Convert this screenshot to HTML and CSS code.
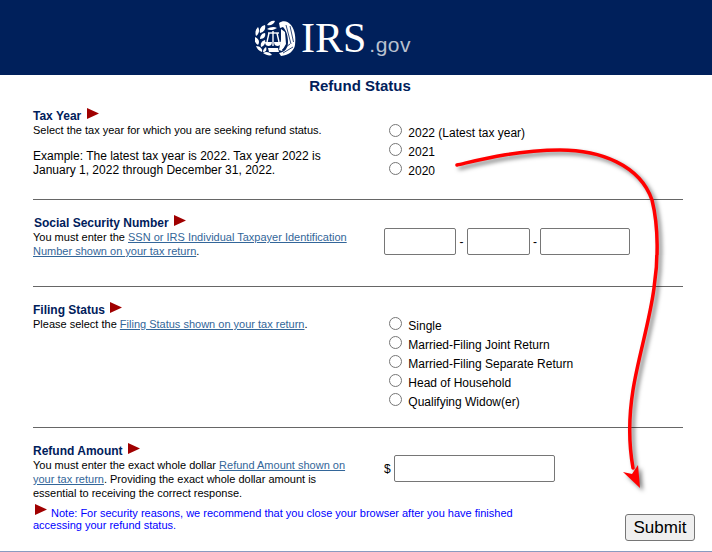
FILE: index.html
```html
<!DOCTYPE html>
<html lang="en">

<head>
    <meta charset="UTF-8">
    <title>Refund Status</title>
    <link rel="stylesheet" href="styles.css">
</head>

<body>
    <header class="banner">
        <svg class="seal" viewBox="0 0 41 36" width="41" height="36" aria-hidden="true">
            <!-- wreath -->
            <g fill="#fff">
                <path d="M10 5 C6 6 4 9 5 13 C9 12 11 9 10 5Z" />
                <path d="M3 7 C0 10 0 13 1 16 C4 14 5 10 3 7Z" />
                <path d="M10 13 C7 13 5 16 5 19 C9 19 11 16 10 13Z" />
                <path d="M0 17 C-1 20 0 23 3 25 C5 22 4 19 0 17Z" />
                <path d="M10 20 C7 21 5 23 6 27 C9 26 11 23 10 20Z" />
                <path d="M1 26 C2 29 4 31 7 32 C8 29 5 26 1 26Z" />
                <path d="M11 27 C9 28 8 30 8 32 C11 32 12 30 11 27Z" />
                <path d="M8 33 C11 35 14 36 17 35 C15 32 11 31 8 33Z" />
                <path d="M12 5 C14 2 17 0 20 1 C19 4 16 6 12 5Z" />
                <path d="M12 9 C15 7 19 6 22 8 C19 10 15 11 12 9Z" />
            </g>
            <!-- eagle body and wing -->
            <g fill="#fff">
                <path d="M24 3 C28 0 33 1 36 5 C40 10 41 18 40 25 C39 31 34 35 26 36 L24 33 C30 32 33 28 33 22 C33 15 31 10 28 7 L25 8 Z" />
                <path d="M26 9 L30 12 L31 24 L27 31 L24 30 L26 20 Z" />
            </g>
            <g stroke="#00205b" stroke-width="0.800" fill="none">
                <path d="M31 5 L36 24" />
                <path d="M35 6 L38.500 22" />
                <path d="M28 33 L38 27" />
                <path d="M27 30 L35 24" />
            </g>
            <!-- scales -->
            <g stroke="#fff" stroke-width="1.400" fill="none">
                <path d="M18 11 L18 26" />
                <path d="M13 13 L24 13" />
                <path d="M14 13 L12 22" />
                <path d="M22 13 L24 22" />
            </g>
            <path d="M10 22 H17 C17 25 15 26 13.500 26 C12 26 10 25 10 22Z" fill="#fff" />
            <path d="M19 22 H26 C26 25 24 26 22.500 26 C21 26 19 25 19 22Z" fill="#fff" />
            <path d="M13 28 H23 L24 32 H14Z" fill="#fff" />
        </svg>
        <span class="irs">IRS</span><span class="gov">.gov</span>
    </header>

    <h1 class="page-title">Refund Status</h1>

    <form class="refund-form">
        <section class="row row-year">
            <div class="info">
                <h2>Tax Year <svg class="marker" viewBox="0 0 12 11"><path d="M0 0 L12 5.500 L0 11Z" /></svg></h2>
                <p class="small">Select the tax year for which you are seeking refund status.</p>
                <p class="example">Example: The latest tax year is 2022. Tax year 2022 is January 1, 2022 through December 31, 2022.</p>
            </div>
            <div class="choices">
                <label><input type="radio" name="year"> 2022 (Latest tax year)</label>
                <label><input type="radio" name="year"> 2021</label>
                <label><input type="radio" name="year"> 2020</label>
            </div>
        </section>

        <section class="row row-ssn">
            <div class="info">
                <h2 class="nudge">Social Security Number <svg class="marker" viewBox="0 0 12 11"><path d="M0 0 L12 5.500 L0 11Z" /></svg></h2>
                <p class="small">You must enter the <a href="#">SSN or IRS Individual Taxpayer Identification Number shown on your tax return</a>.</p>
            </div>
            <div class="ssn">
                <input class="ssn-a" type="text"><span>-</span><input class="ssn-b" type="text"><span class="dash-b">-</span><input class="ssn-c" type="text">
            </div>
        </section>

        <section class="row row-status">
            <div class="info">
                <h2>Filing Status <svg class="marker" viewBox="0 0 12 11"><path d="M0 0 L12 5.500 L0 11Z" /></svg></h2>
                <p class="small">Please select the <a href="#">Filing Status shown on your tax return</a>.</p>
            </div>
            <div class="choices">
                <label><input type="radio" name="status"> Single</label>
                <label><input type="radio" name="status"> Married-Filing Joint Return</label>
                <label><input type="radio" name="status"> Married-Filing Separate Return</label>
                <label><input type="radio" name="status"> Head of Household</label>
                <label><input type="radio" name="status"> Qualifying Widow(er)</label>
            </div>
        </section>

        <section class="row row-amount">
            <div class="info">
                <h2>Refund Amount <svg class="marker" viewBox="0 0 12 11"><path d="M0 0 L12 5.500 L0 11Z" /></svg></h2>
                <p class="small">You must enter the exact whole dollar <a href="#">Refund Amount shown on your tax return</a>. Providing the exact whole dollar amount is essential to receiving the correct response.</p>
            </div>
            <div class="amount">
                <span>$</span><input type="text">
            </div>
        </section>

        <div class="form-end">
            <p class="note"><svg class="marker" viewBox="0 0 12 11"><path d="M0 0 L12 5.500 L0 11Z" /></svg> Note: For security reasons, we recommend that you close your browser after you have finished accessing your refund status.</p>
            <button type="button">Submit</button>
        </div>
    </form>

    <!-- hand drawn arrow on top of the page -->
    <svg class="scribble" viewBox="0 0 712 552" width="712" height="552" aria-hidden="true">
        <path d="M457 165 C475 161 515 150 560 150 C600 150 640 165 652 200 C659 228 658 262 654 288 C650 320 638 358 633 390 C629 415 628 440 633 468" fill="none" stroke="#ff0000" stroke-width="3.500" stroke-linecap="round" />
        <path d="M623 472 L632 474 L638 465 L640 488Z" fill="#ff0000" />
    </svg>
</body>

</html>
```

FILE: styles.css
```css
body {
    margin: 0;
    font-family: "Liberation Sans", Arial, sans-serif;
    font-size: 12px;
    color: #000;
    background: #fff;
}

.banner {
    height: 75px;
    background-color: #00205b;
    display: flex;
    justify-content: center;
    align-items: center;
    padding-right: 46px;
    box-sizing: border-box;
}

.seal {
    margin-right: 5px;
}

.irs {
    font-family: "Liberation Serif", serif;
    font-size: 42px;
    color: #fff;
}

.gov {
    font-size: 21px;
    color: #b9c0cf;
    letter-spacing: 0.5px;
    margin-top: 14px;
    margin-left: 3px;
}

.page-title {
    margin: 0;
    padding-left: 8px;
    height: 22px;
    line-height: 22px;
    font-size: 15px;
    text-align: center;
    color: #00205b;
}

.refund-form {
    margin: 0 29px 0 33px;
}

.row {
    display: grid;
    grid-template-columns: 351px 1fr;
    border-bottom: 1px solid #666;
    box-sizing: border-box;
}

.row-year {
    height: 103px;
    padding-top: 11px;
}

.row-ssn {
    height: 87px;
    padding-top: 15px;
}

.row-status {
    height: 141px;
    padding-top: 15px;
}

.row-amount {
    height: 78px;
    padding-top: 15px;
    border-bottom: none;
}

h2 {
    margin: 0;
    font-size: 12px;
    line-height: 14px;
    font-weight: bold;
    color: #00205b;
}

.nudge {
    margin-left: 1px;
}

.marker {
    width: 12px;
    height: 11px;
    margin-left: 2px;
    vertical-align: 1px;
    fill: #a00000;
}

.small {
    margin: 0;
    font-size: 11px;
    line-height: 14px;
    max-width: 315px;
}

.example {
    margin: 12px 0 0;
    font-size: 12px;
    line-height: 14px;
    max-width: 300px;
}

a {
    color: #336699;
}

.choices {
    display: flex;
    flex-direction: column;
}

.row-year .choices {
    margin-top: 13px;
}

.row-status .choices {
    margin-top: 12px;
}

.choices label {
    height: 19px;
    line-height: 19px;
    white-space: nowrap;
}

.choices input {
    margin: 3px 3px 0 5px;
    vertical-align: 0;
}

.ssn {
    display: flex;
    align-items: center;
    align-self: start;
    margin-top: 13px;
}

.ssn span {
    width: 11px;
    text-align: center;
}

.ssn .dash-b {
    width: 10px;
}

input[type="text"] {
    height: 27px;
    box-sizing: border-box;
    border: 1px solid #767676;
    border-radius: 2px;
    padding: 0;
    background: #fff;
}

.ssn-a {
    width: 72px;
}

.ssn-b {
    width: 63px;
}

.ssn-c {
    width: 90px;
}

.amount {
    display: flex;
    align-items: center;
    align-self: start;
    gap: 3px;
    margin-top: 12px;
}

.amount input {
    width: 161px;
}

.form-end {
    display: flex;
    justify-content: space-between;
    align-items: flex-end;
    height: 45px;
    margin-right: -12px;
}

.note {
    margin: 0 0 20px;
    width: 492px;
    font-size: 11px;
    line-height: 12px;
    color: #0000ff;
}

.note .marker {
    margin-right: 1px;
    vertical-align: 2px;
}

button {
    width: 70px;
    height: 27px;
    margin-bottom: 10px;
    padding: 0;
    font-family: "Liberation Sans", Arial, sans-serif;
    font-size: 17px;
    color: #000;
    background-color: #efefef;
    border: 1px solid #767676;
    border-radius: 3px;
}

.scribble {
    position: absolute;
    left: 0;
    top: 0;
    pointer-events: none;
    filter: drop-shadow(3px 3px 2px rgba(0, 0, 0, 0.5));
}

html {
    border-bottom: 1px solid #8a9bc0;
}
```
